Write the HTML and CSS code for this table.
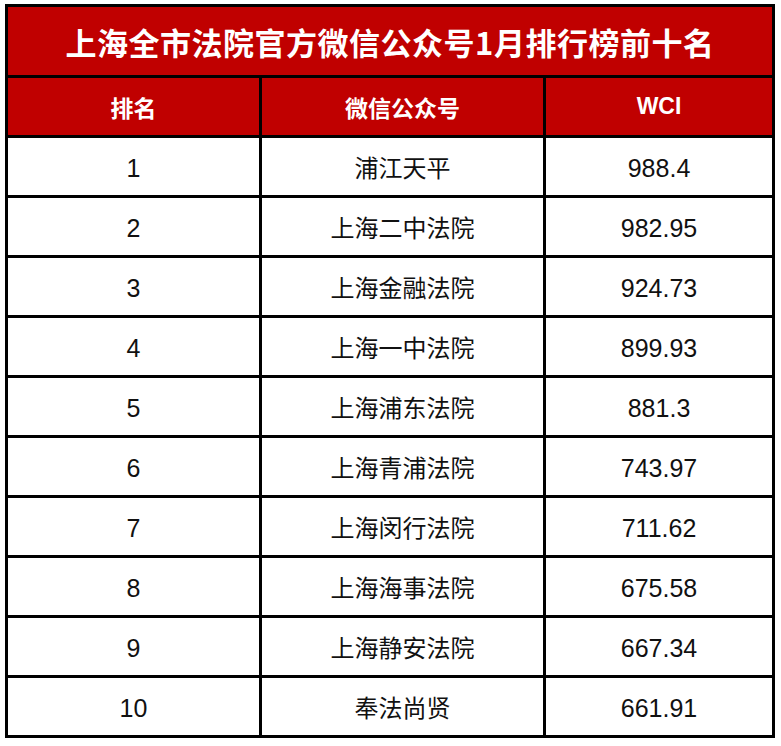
FILE: index.html
```html
<!DOCTYPE html>
<html lang="zh-CN">
<head>
<meta charset="utf-8">
<title>上海全市法院官方微信公众号1月排行榜前十名</title>
<link rel="stylesheet" href="styles.css">
</head>
<body>
<div class="board">
  <div class="title">上海全市法院官方微信公众号1月排行榜前十名</div>
  <div class="head">排名</div>
  <div class="head">微信公众号</div>
  <div class="head">WCI</div>
  <div class="cell">1</div><div class="cell name">浦江天平</div><div class="cell">988.4</div>
  <div class="cell">2</div><div class="cell name">上海二中法院</div><div class="cell">982.95</div>
  <div class="cell">3</div><div class="cell name">上海金融法院</div><div class="cell">924.73</div>
  <div class="cell">4</div><div class="cell name">上海一中法院</div><div class="cell">899.93</div>
  <div class="cell">5</div><div class="cell name">上海浦东法院</div><div class="cell">881.3</div>
  <div class="cell">6</div><div class="cell name">上海青浦法院</div><div class="cell">743.97</div>
  <div class="cell">7</div><div class="cell name">上海闵行法院</div><div class="cell">711.62</div>
  <div class="cell">8</div><div class="cell name">上海海事法院</div><div class="cell">675.58</div>
  <div class="cell">9</div><div class="cell name">上海静安法院</div><div class="cell">667.34</div>
  <div class="cell">10</div><div class="cell name">奉法尚贤</div><div class="cell">661.91</div>
</div>
</body>
</html>
```

FILE: styles.css
```css
html, body {
  margin: 0;
  padding: 0;
  background: #ffffff;
}
body {
  padding: 4px 0 0 5px;
  font-family: "Liberation Sans", "Noto Sans CJK SC", sans-serif;
}
.board {
  width: 770px;
  box-sizing: border-box;
  display: grid;
  grid-template-columns: 251px 281px 226px;
  grid-template-rows: 68px 57px repeat(10, 57px);
  gap: 3px;
  padding: 3px;
  background: #000000;
}
.title {
  grid-column: 1 / -1;
  background: #c00000;
  color: #ffffff;
  font-family: "Noto Sans CJK SC", sans-serif;
  font-weight: 700;
  font-size: 31px;
  display: flex;
  align-items: center;
  justify-content: center;
  letter-spacing: 0.5px;
}
.head {
  background: #c00000;
  color: #ffffff;
  font-weight: 700;
  font-size: 23px;
  display: flex;
  align-items: center;
  justify-content: center;
}
.cell {
  background: #ffffff;
  color: #111111;
  font-size: 25px;
  padding-top: 3px;
  display: flex;
  align-items: center;
  justify-content: center;
}
.name {
  font-family: "Noto Sans CJK SC", sans-serif;
  font-size: 24px;
  padding-top: 0;
}
```
